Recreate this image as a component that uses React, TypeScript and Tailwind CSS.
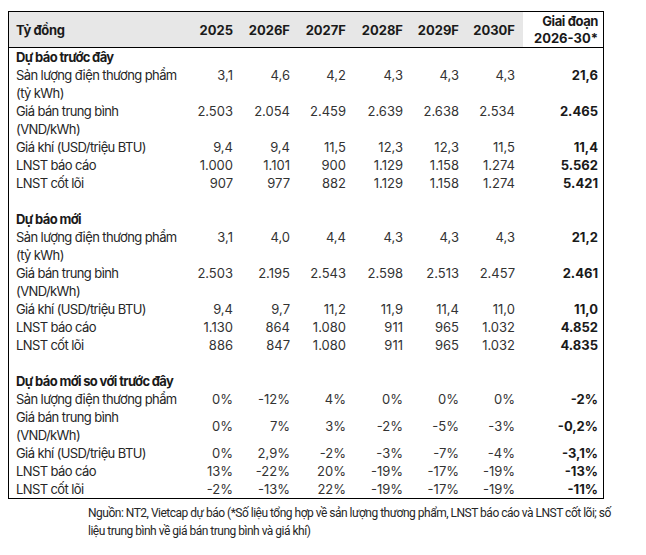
import React from "react";

type Row = {
  label: string[];
  values: string[];
  total: string;
};

type Section = {
  title: string;
  center?: boolean;
  rows: Row[];
};

const years = ["2025", "2026F", "2027F", "2028F", "2029F", "2030F"];

const sections: Section[] = [
  {
    title: "Dự báo trước đây",
    rows: [
      { label: ["Sản lượng điện thương phẩm", "(tỷ kWh)"], values: ["3,1", "4,6", "4,2", "4,3", "4,3", "4,3"], total: "21,6" },
      { label: ["Giá bán trung bình", "(VND/kWh)"], values: ["2.503", "2.054", "2.459", "2.639", "2.638", "2.534"], total: "2.465" },
      { label: ["Giá khí (USD/triệu BTU)"], values: ["9,4", "9,4", "11,5", "12,3", "12,3", "11,5"], total: "11,4" },
      { label: ["LNST báo cáo"], values: ["1.000", "1.101", "900", "1.129", "1.158", "1.274"], total: "5.562" },
      { label: ["LNST cốt lõi"], values: ["907", "977", "882", "1.129", "1.158", "1.274"], total: "5.421" },
    ],
  },
  {
    title: "Dự báo mới",
    rows: [
      { label: ["Sản lượng điện thương phẩm", "(tỷ kWh)"], values: ["3,1", "4,0", "4,4", "4,3", "4,3", "4,3"], total: "21,2" },
      { label: ["Giá bán trung bình", "(VND/kWh)"], values: ["2.503", "2.195", "2.543", "2.598", "2.513", "2.457"], total: "2.461" },
      { label: ["Giá khí (USD/triệu BTU)"], values: ["9,4", "9,7", "11,2", "11,9", "11,4", "11,0"], total: "11,0" },
      { label: ["LNST báo cáo"], values: ["1.130", "864", "1.080", "911", "965", "1.032"], total: "4.852" },
      { label: ["LNST cốt lõi"], values: ["886", "847", "1.080", "911", "965", "1.032"], total: "4.835" },
    ],
  },
  {
    title: "Dự báo mới so với trước đây",
    center: true,
    rows: [
      { label: ["Sản lượng điện thương phẩm"], values: ["0%", "-12%", "4%", "0%", "0%", "0%"], total: "-2%" },
      { label: ["Giá bán trung bình", "(VND/kWh)"], values: ["0%", "7%", "3%", "-2%", "-5%", "-3%"], total: "-0,2%" },
      { label: ["Giá khí (USD/triệu BTU)"], values: ["0%", "2,9%", "-2%", "-3%", "-7%", "-4%"], total: "-3,1%" },
      { label: ["LNST báo cáo"], values: ["13%", "-22%", "20%", "-19%", "-17%", "-19%"], total: "-13%" },
      { label: ["LNST cốt lõi"], values: ["-2%", "-13%", "22%", "-19%", "-17%", "-19%"], total: "-11%" },
    ],
  },
];

export default function App() {
  return (
    <div className="w-[646px] h-[555px] bg-white text-[13px] leading-[18px] text-[#262626] font-['Inter','Noto_Sans',sans-serif]">
      <div className="pt-[11px] pl-[8px]">

        {/* table */}
        <div className="w-[596px] border border-black">

          {/* header */}
          <div className="flex border-b border-black font-bold text-[#1a1a1a]">
            <div className="w-[514px] h-[35px] bg-[#e7e7e7] pl-[7px] pr-[8px] grid grid-cols-[161px_56px_57px_56px_57px_56px_56px] items-center">
              <div className="tracking-[-0.4px]">Tỷ đồng</div>
              {years.map((y) => (
                <div key={y} className="text-right">{y}</div>
              ))}
            </div>
            <div className="w-[80px] h-[35px] pr-[5px] flex flex-col justify-center items-end leading-[17px]">
              <div className="tracking-[-0.4px]">Giai đoạn</div>
              <div>2026-30*</div>
            </div>
          </div>

          {/* body */}
          <div className="pl-[7px] pr-[5px]">
            {sections.map((s, si) => (
              <div key={s.title}>
                {si > 0 && <div className="h-[18px]" />}
                <div className="font-bold text-[#1a1a1a] tracking-[-0.65px]">{s.title}</div>
                {s.rows.map((r) => (
                  <div
                    key={r.label[0]}
                    className={
                      "grid grid-cols-[161px_56px_57px_56px_57px_56px_56px_83px] " +
                      (s.center ? "items-center" : "items-start")
                    }
                  >
                    <div className="whitespace-nowrap tracking-[-0.6px]">
                      {r.label.map((l) => (
                        <div key={l}>{l}</div>
                      ))}
                    </div>
                    {r.values.map((v, i) => (
                      <div key={i} className="text-right text-[#333333]">{v}</div>
                    ))}
                    <div className="text-right font-bold text-[#1a1a1a]">{r.total}</div>
                  </div>
                ))}
              </div>
            ))}
          </div>
        </div>

        {/* source note */}
        <div className="mt-[5px] ml-[80px] text-[12px] leading-[18px] text-[#262626] font-['Roboto',sans-serif] tracking-[-0.5px] whitespace-nowrap">
          <div>Nguồn: NT2, Vietcap dự báo (*Số liệu tổng hợp về sản lượng thương phẩm, LNST báo cáo và LNST cốt lõi; số</div>
          <div>liệu trung bình về giá bán trung bình và giá khí)</div>
        </div>
      </div>
    </div>
  );
}
